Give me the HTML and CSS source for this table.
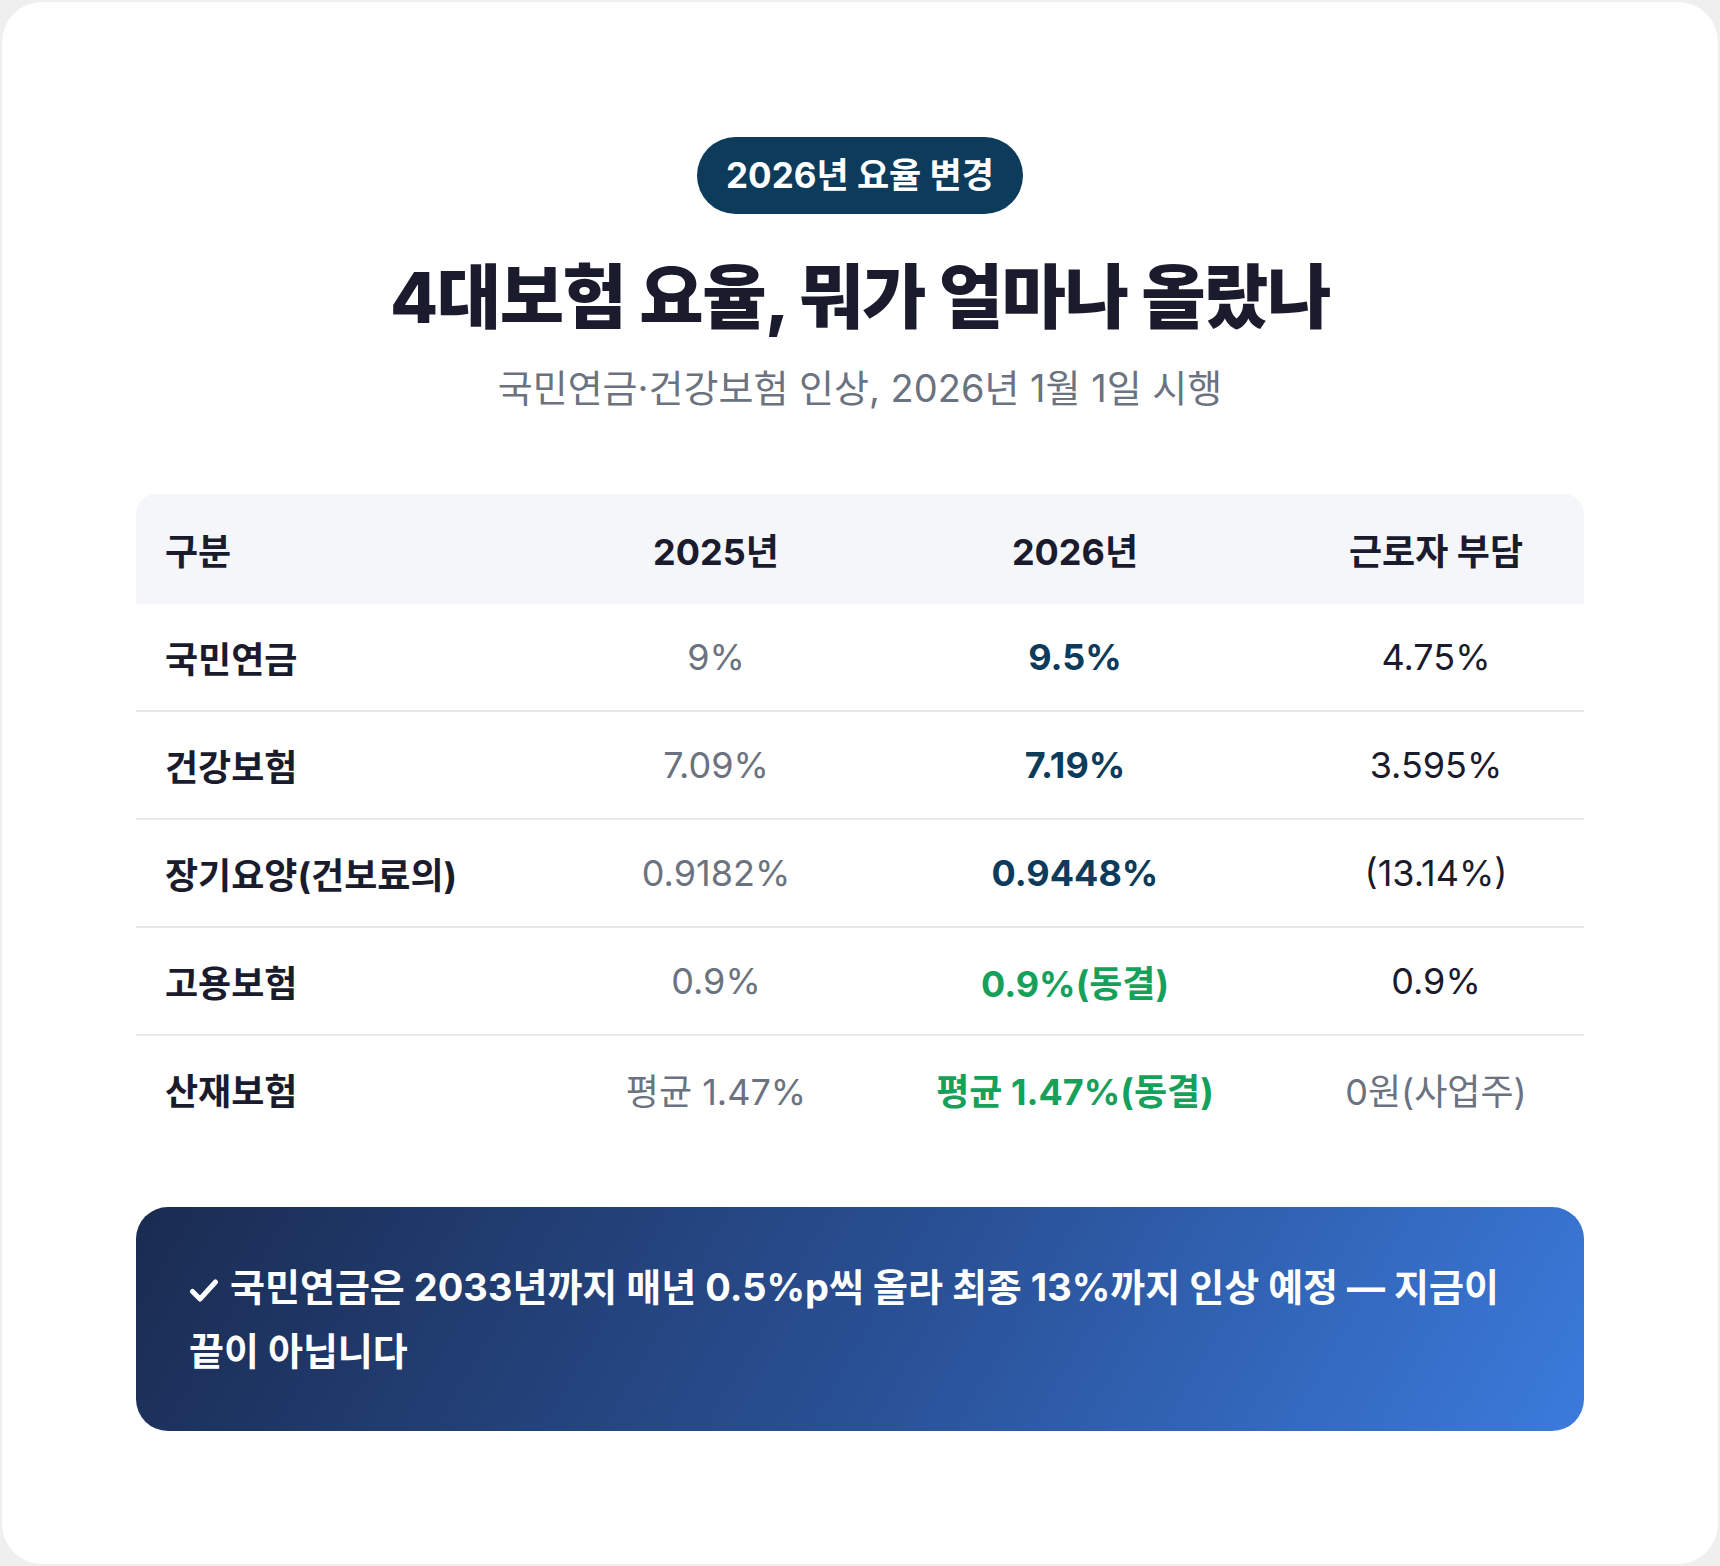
FILE: index.html
```html
<!DOCTYPE html>
<html lang="ko">
<head>
<meta charset="utf-8">
<title>4대보험 요율</title>
<link rel="stylesheet" href="styles.css">
</head>
<body>
<div class="card">
  <div class="head">
    <span class="badge">2026년 요율 변경</span>
    <h1 class="title">4대보험 요율, 뭐가 얼마나 올랐나</h1>
    <p class="subtitle">국민연금·건강보험 인상, 2026년 1월 1일 시행</p>
  </div>
  <table class="rates">
    <colgroup>
      <col class="c-label">
      <col class="c-old">
      <col class="c-new">
      <col class="c-worker">
    </colgroup>
    <thead>
      <tr>
        <th class="label">구분</th>
        <th>2025년</th>
        <th>2026년</th>
        <th>근로자 부담</th>
      </tr>
    </thead>
    <tbody>
      <tr>
        <td class="label">국민연금</td>
        <td class="old">9%</td>
        <td class="new up">9.5%</td>
        <td class="worker">4.75%</td>
      </tr>
      <tr>
        <td class="label">건강보험</td>
        <td class="old">7.09%</td>
        <td class="new up">7.19%</td>
        <td class="worker">3.595%</td>
      </tr>
      <tr>
        <td class="label">장기요양(건보료의)</td>
        <td class="old">0.9182%</td>
        <td class="new up">0.9448%</td>
        <td class="worker">(13.14%)</td>
      </tr>
      <tr>
        <td class="label">고용보험</td>
        <td class="old">0.9%</td>
        <td class="new freeze">0.9%(동결)</td>
        <td class="worker">0.9%</td>
      </tr>
      <tr>
        <td class="label">산재보험</td>
        <td class="old">평균 1.47%</td>
        <td class="new freeze">평균 1.47%(동결)</td>
        <td class="worker muted">0원(사업주)</td>
      </tr>
    </tbody>
  </table>
  <div class="callout">
    <p><svg class="check" viewBox="0 0 30 25" width="30" height="25" aria-hidden="true"><path d="M3.5 13.5 L11 21 L26.5 4" fill="none" stroke="#ffffff" stroke-width="5" stroke-linecap="round" stroke-linejoin="round"/></svg> 국민연금은 2033년까지 매년 0.5%p씩 올라 최종 13%까지 인상 예정 — 지금이 끝이 아닙니다</p>
  </div>
</div>
</body>
</html>
```

FILE: styles.css
```css
html, body {
  margin: 0;
  padding: 0;
}

body {
  background: #efefef;
  font-family: "Inter", "Noto Sans CJK KR", "Noto Sans", sans-serif;
  color: #1b1b2e;
}

.card {
  margin: 2px;
  height: 1562px;
  box-sizing: border-box;
  background: #ffffff;
  border-radius: 40px;
  padding: 135px 134px 0;
}

.head {
  display: flex;
  flex-direction: column;
  align-items: center;
}

.badge {
  display: inline-block;
  background: #0c3b5b;
  color: #ffffff;
  font-size: 35px;
  font-weight: 700;
  line-height: 49px;
  padding: 14px 29px;
  border-radius: 40px;
}

.title {
  margin: 42px 0 0;
  font-size: 70px;
  font-weight: 800;
  line-height: 83px;
  letter-spacing: -1.5px;
  color: #1b1b2e;
}

.subtitle {
  margin: 24px 0 0;
  font-size: 38px;
  font-weight: 400;
  line-height: 51px;
  color: #6b7280;
}

.rates {
  margin-top: 80px;
  width: 100%;
  border-collapse: separate;
  border-spacing: 0;
  table-layout: fixed;
  font-size: 36px;
}

.c-label { width: 434px; }
.c-old { width: 292px; }
.c-new { width: 426px; }
.c-worker { width: 296px; }

.rates th {
  background: #f5f6fa;
  height: 110px;
  padding: 0;
  font-weight: 700;
  text-align: center;
  color: #1b1b2e;
}

.rates th:first-child { border-top-left-radius: 20px; }
.rates th:last-child { border-top-right-radius: 20px; }

.rates td {
  height: 106px;
  padding: 0;
  text-align: center;
  border-bottom: 2px solid #e5e7eb;
}

.rates tbody tr:last-child td {
  border-bottom: none;
}

.rates .label {
  text-align: left;
  padding-left: 29px;
  font-weight: 700;
  color: #1b1b2e;
}

.old { color: #6b7280; }
.new { font-weight: 700; }
.up { color: #0c3b5b; }
.freeze { color: #16a05a; }
.worker { color: #1b1b2e; }
.worker.muted { color: #6b7280; }

.callout {
  margin-top: 65px;
  border-radius: 32px;
  background: linear-gradient(120deg, #1a2b50 0%, #2a5298 55%, #3b7bdc 100%);
  padding: 48px 53px 48px;
}

.callout p {
  margin: 0;
  color: #ffffff;
  font-size: 38px;
  font-weight: 700;
  line-height: 64px;
}

.check {
  vertical-align: -2px;
  margin-right: 2px;
}
```
